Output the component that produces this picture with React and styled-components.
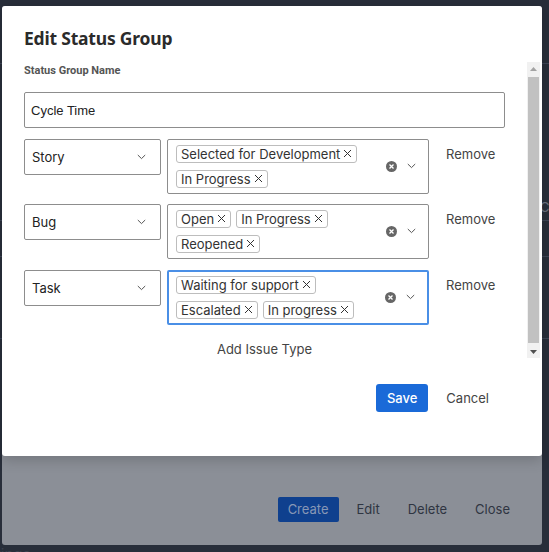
import React from 'react';
import styled, { createGlobalStyle } from 'styled-components';

const GlobalStyle = createGlobalStyle`
	html, body {
		margin: 0;
		padding: 0;
		background: #282e3a;
	}
	* {
		box-sizing: border-box;
	}
`;

const Page = styled.div`
	position: relative;
	width: 549px;
	height: 552px;
	overflow: hidden;
	font-family: Inter, 'Liberation Sans', sans-serif;
`;

const BgTable = styled.div`
	display: flex;
	flex-direction: column;
`;

const BgRow = styled.div`
	height: ${(p) => p.h}px;
	border-bottom: 1px solid #3d4555;
	color: #6b7280;
	font-size: 13px;
	display: flex;
	align-items: flex-end;
	padding-left: 540px;
	padding-bottom: 5px;
	white-space: nowrap;
`;

const BgFooter = styled.div`
	margin-top: 206px;
	margin-left: -27px;
	color: #3b414e;
	font-size: 15px;
`;

const UnderModal = styled.div`
	position: absolute;
	top: 6px;
	left: 2px;
	width: 540px;
	height: 539px;
	background: #8b8f97;
	border-radius: 3px;
	display: flex;
	flex-direction: column;
	justify-content: flex-end;
`;

const UnderFooter = styled.div`
	display: flex;
	justify-content: flex-end;
	align-items: center;
	padding: 0 22px 23px 0;
`;

const UnderButton = styled.div`
	font-size: 13px;
	height: 25px;
	line-height: 25px;
	padding: 0 10px;
	margin-left: ${(p) => p.gap || 0}px;
	border-radius: 2px;
	color: ${(p) => (p.primary ? '#8797b6' : '#2f3542')};
	background: ${(p) => (p.primary ? '#0f408e' : 'transparent')};
`;

const Modal = styled.div`
	position: absolute;
	top: 6px;
	left: 2px;
	width: 540px;
	height: 450px;
	background: #fff;
	border-radius: 3px;
	box-shadow: 0 4px 14px rgba(0, 0, 0, 0.18);
	display: flex;
	flex-direction: column;
`;

const Title = styled.h2`
	margin: 0;
	padding: 20px 22px 0;
	height: 56px;
	font-family: 'Noto Sans', 'Open Sans', sans-serif;
	font-weight: 700;
	font-size: 17.5px;
	letter-spacing: -0.2px;
	line-height: 24px;
	color: #2b2b2b;
`;

const ScrollArea = styled.div`
	display: flex;
	height: 296px;
	margin-right: 2px;
`;

const ScrollContent = styled.div`
	flex: 1;
	padding: 2px 22px 0 22px;
	overflow: hidden;
`;

const Scrollbar = styled.div`
	width: 13px;
	background: #f1f1f1;
	display: flex;
	flex-direction: column;
	align-items: center;
`;

const ScrollArrow = styled.div`
	height: 13px;
	display: flex;
	align-items: center;
	justify-content: center;
`;

const ScrollThumb = styled.div`
	flex: 1;
	width: 11px;
	margin: 2px 0;
	background: #c1c1c1;
`;

const Label = styled.div`
	font-family: Roboto, 'Liberation Sans', sans-serif;
	font-weight: 700;
	font-size: 11px;
	line-height: 14px;
	color: #555;
`;

const TextInput = styled.div`
	margin-top: 14px;
	height: 36px;
	border: 1px solid #8d8d8d;
	border-radius: 2px;
	padding: 0 6px;
	display: flex;
	align-items: center;
	font-family: 'Liberation Sans', Arial, sans-serif;
	font-size: 13px;
	color: #222;
`;

const Row = styled.div`
	display: flex;
	align-items: flex-start;
	margin-top: ${(p) => p.top}px;
`;

const Select = styled.div`
	width: 137px;
	height: 36px;
	border: 1px solid #8d8d8d;
	border-radius: 2px;
	padding: 0 14px 0 7px;
	display: flex;
	align-items: center;
	justify-content: space-between;
	font-size: 13px;
	color: #222;
`;

const Multi = styled.div`
	width: 262px;
	margin-left: 6px;
	min-height: 55px;
	border: ${(p) => (p.focused ? '2px solid #4a8fe6' : '1px solid #8d8d8d')};
	border-radius: 2px;
	padding: ${(p) => (p.focused ? '3px 0 4px 7px' : '4px 0 5px 8px')};
	display: flex;
	align-items: center;
`;

const Values = styled.div`
	flex: 1;
	display: flex;
	flex-wrap: wrap;
	gap: 7px 5px;
`;

const Tag = styled.div`
	display: flex;
	align-items: center;
	gap: 3px;
	height: 18px;
	padding: 0 4px;
	border: 1px solid #bdbdbd;
	border-radius: 3px;
	font-size: 13px;
	color: #333;
	white-space: nowrap;
`;

const Indicators = styled.div`
	display: flex;
	align-items: center;
	gap: 10px;
	padding-right: 12px;
	margin-left: 6px;
`;

const LinkButton = styled.div`
	font-size: 13px;
	line-height: 16px;
	color: #444;
	margin-left: ${(p) => p.left || 18}px;
	margin-top: ${(p) => p.top || 0}px;
`;

const AddIssue = styled.div`
	margin-top: 16px;
	text-align: center;
	font-size: 13px;
	line-height: 16px;
	color: #444;
`;

const Footer = styled.div`
	display: flex;
	justify-content: flex-end;
	align-items: center;
	padding: 26px 53px 0 0;
`;

const SaveButton = styled.div`
	height: 28px;
	padding: 0 11px;
	line-height: 28px;
	background: #1a6ad8;
	border-radius: 3px;
	color: #fff;
	font-size: 13px;
	font-weight: 500;
`;

const Chevron = () => (
	<svg width="9" height="6" viewBox="0 0 9 6">
		<path d="M0.8 1 L4.5 4.6 L8.2 1" fill="none" stroke="#555" strokeWidth="1" />
	</svg>
);

const Cross = () => (
	<svg width="9" height="9" viewBox="0 0 9 9">
		<path d="M1 1 L8 8 M8 1 L1 8" stroke="#333" strokeWidth="1" />
	</svg>
);

const ClearIcon = () => (
	<svg width="11" height="11" viewBox="0 0 11 11">
		<circle cx="5.5" cy="5.5" r="5.5" fill="#666" />
		<path d="M3.5 3.5 L7.5 7.5 M7.5 3.5 L3.5 7.5" stroke="#fff" strokeWidth="1.3" />
	</svg>
);

const rows = [
	{ type: 'Story', values: ['Selected for Development', 'In Progress'], top: 11 },
	{ type: 'Bug', values: ['Open', 'In Progress', 'Reopened'], top: 10 },
	{ type: 'Task', values: ['Waiting for support', 'Escalated', 'In progress'], top: 11, focused: true },
];

const App = () => {
	return (
		<>
			<GlobalStyle />
			<Page>
				<BgTable>
					<BgRow h={64} />
					<BgRow h={157}>Configuration</BgRow>
					<BgRow h={36} />
					<BgRow h={82} />
					<BgFooter>Settings</BgFooter>
				</BgTable>
				<UnderModal>
					<UnderFooter>
						<UnderButton primary>Create</UnderButton>
						<UnderButton gap={8}>Edit</UnderButton>
						<UnderButton gap={8}>Delete</UnderButton>
						<UnderButton gap={8}>Close</UnderButton>
					</UnderFooter>
				</UnderModal>
				<Modal>
					<Title>Edit Status Group</Title>
					<ScrollArea>
						<ScrollContent>
							<Label>Status Group Name</Label>
							<TextInput>Cycle Time</TextInput>
							{rows.map((row) => (
								<Row key={row.type} top={row.top}>
									<Select>
										{row.type}
										<Chevron />
									</Select>
									<Multi focused={row.focused}>
										<Values>
											{row.values.map((v) => (
												<Tag key={v}>
													{v}
													<Cross />
												</Tag>
											))}
										</Values>
										<Indicators>
											<ClearIcon />
											<Chevron />
										</Indicators>
									</Multi>
									<LinkButton top={7} left={17}>Remove</LinkButton>
								</Row>
							))}
							<AddIssue>Add Issue Type</AddIssue>
						</ScrollContent>
						<Scrollbar>
							<ScrollArrow>
								<svg width="7" height="4" viewBox="0 0 7 4">
									<path d="M0 4 L3.5 0 L7 4 Z" fill="#a3a3a3" />
								</svg>
							</ScrollArrow>
							<ScrollThumb />
							<ScrollArrow>
								<svg width="7" height="4" viewBox="0 0 7 4">
									<path d="M0 0 L3.5 4 L7 0 Z" fill="#505050" />
								</svg>
							</ScrollArrow>
						</Scrollbar>
					</ScrollArea>
					<Footer>
						<SaveButton>Save</SaveButton>
						<LinkButton>Cancel</LinkButton>
					</Footer>
				</Modal>
			</Page>
		</>
	);
};

export default App;
